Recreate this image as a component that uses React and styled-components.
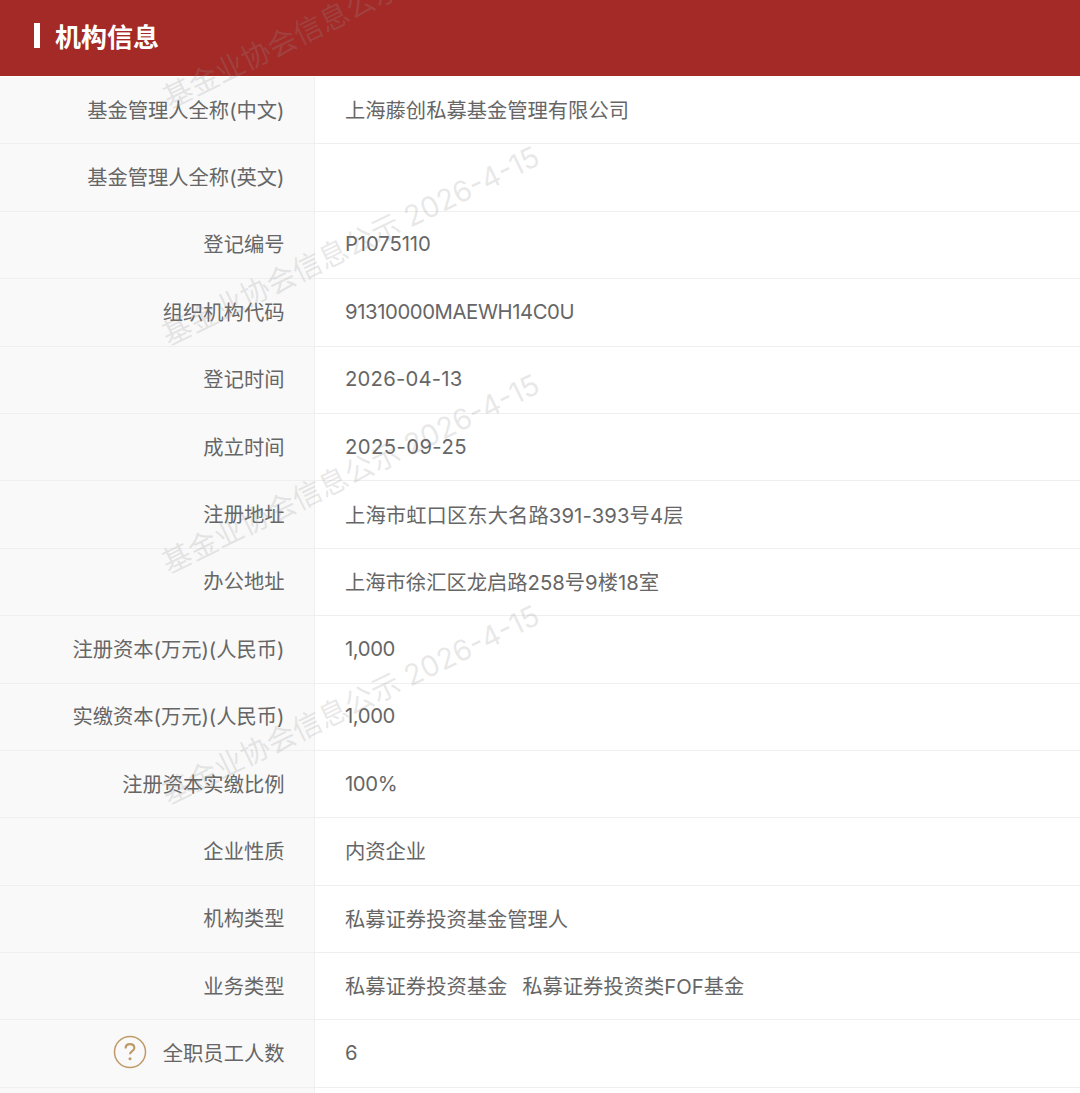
import React from "react";
import styled, { createGlobalStyle } from "styled-components";

const GlobalStyle = createGlobalStyle`
  html, body {
    margin: 0;
    padding: 0;
    background: #fff;
  }
`;

const Page = styled.div`
  position: relative;
  width: 1080px;
  height: 1093px;
  overflow: hidden;
  font-family: Inter, "Noto Sans CJK SC", sans-serif;
`;

const Header = styled.div`
  display: flex;
  align-items: center;
  gap: 15px;
  height: 76px;
  padding: 0 0 5px 34px;
  box-sizing: border-box;
  background: #a32a27;
  color: #fff;
  font-size: 26px;
  font-weight: 700;
`;

const HeaderBar = styled.span`
  width: 6px;
  height: 25px;
  background: #fff;
`;

const Table = styled.div`
  padding-top: 1px;
`;

const Row = styled.div`
  display: grid;
  grid-template-columns: 315px 1fr;
  height: 67.4px;
  box-sizing: border-box;
  border-bottom: 1.5px solid #efefef;
`;

const Label = styled.div`
  display: flex;
  align-items: center;
  justify-content: flex-end;
  padding: 0 29.5px 3px 0;
  background: #f9f9f9;
  border-right: 1.5px solid #efefef;
  color: #666;
  font-size: 20.3px;
`;

const Value = styled.div`
  display: flex;
  align-items: center;
  gap: 15px;
  padding: 0 0 2px 30px;
  color: #666;
  font-size: 20.3px;
  letter-spacing: ${(p) => p.$spacing || 0}px;
`;

const HelpIcon = styled.svg`
  width: 34px;
  height: 34px;
  margin-right: 16px;
`;

const Watermark = styled.div`
  position: absolute;
  left: ${(p) => p.$x}px;
  top: ${(p) => p.$y}px;
  transform: rotate(-26deg);
  transform-origin: left center;
  white-space: nowrap;
  color: rgba(150, 150, 150, 0.22);
  font-size: 29px;
  line-height: 40px;
  pointer-events: none;
`;

const rows = [
  { label: "基金管理人全称(中文)", values: ["上海藤创私募基金管理有限公司"] },
  { label: "基金管理人全称(英文)", values: [] },
  { label: "登记编号", values: ["P1075110"], spacing: -0.1 },
  { label: "组织机构代码", values: ["91310000MAEWH14C0U"], spacing: -0.4 },
  { label: "登记时间", values: ["2026-04-13"], spacing: 0.2 },
  { label: "成立时间", values: ["2025-09-25"], spacing: 0.4 },
  { label: "注册地址", values: ["上海市虹口区东大名路391-393号4层"], spacing: 0.1 },
  { label: "办公地址", values: ["上海市徐汇区龙启路258号9楼18室"] },
  { label: "注册资本(万元)(人民币)", values: ["1,000"], spacing: -0.4 },
  { label: "实缴资本(万元)(人民币)", values: ["1,000"], spacing: -0.4 },
  { label: "注册资本实缴比例", values: ["100%"], spacing: -0.4 },
  { label: "企业性质", values: ["内资企业"] },
  { label: "机构类型", values: ["私募证券投资基金管理人"] },
  { label: "业务类型", values: ["私募证券投资基金", "私募证券投资类FOF基金"] },
  { label: "全职员工人数", values: ["6"], help: true },
  { label: "", values: [] },
];

const watermarks = [
  [165, 80],
  [164, 317],
  [164, 545],
  [164, 776],
];

const App = () => {
  return (
    <Page>
      <GlobalStyle />
      <Header>
        <HeaderBar />
        机构信息
      </Header>
      <Table>
        {rows.map((row, i) => (
          <Row key={i}>
            <Label>
              {row.help && (
                <HelpIcon viewBox="0 0 34 34">
                  <circle cx="17" cy="17" r="15.5" fill="none" stroke="#bf9a68" strokeWidth="1.5" />
                  <path
                    d="M12.6 13.4c0-2.6 1.9-4.2 4.4-4.2s4.3 1.5 4.3 3.7c0 3.3-4.3 3.3-4.3 6.4"
                    fill="none"
                    stroke="#bf9a68"
                    strokeWidth="2.2"
                  />
                  <circle cx="17" cy="23.8" r="1.5" fill="#bf9a68" />
                </HelpIcon>
              )}
              {row.label}
            </Label>
            <Value $spacing={row.spacing}>
              {row.values.map((v) => (
                <span key={v}>{v}</span>
              ))}
            </Value>
          </Row>
        ))}
      </Table>
      {watermarks.map(([x, y]) => (
        <Watermark key={y} $x={x} $y={y}>
          基金业协会信息公示 2026-4-15
        </Watermark>
      ))}
    </Page>
  );
};

export default App;
